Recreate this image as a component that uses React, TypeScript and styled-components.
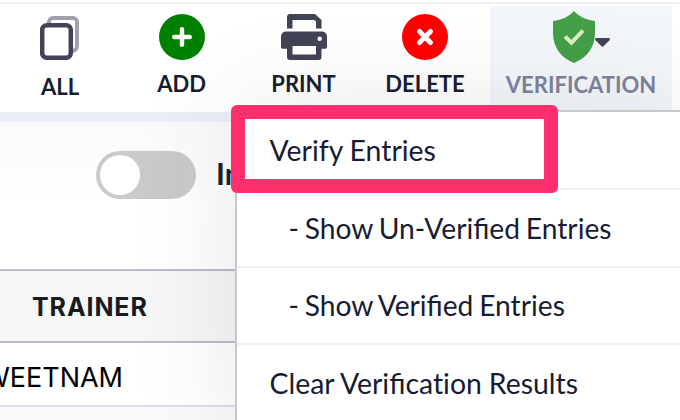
import React from "react";
import styled, { createGlobalStyle } from "styled-components";

const GlobalStyle = createGlobalStyle`
  * { box-sizing: border-box; }
  body { margin: 0; background: #fff; overflow: hidden; }
`;

const Page = styled.div`
  position: relative;
  width: 680px;
  height: 420px;
  padding-top: 2px;
  overflow: hidden;
  background: #fff;
  color: #181c32;
  font-family: Lato, "Liberation Sans", sans-serif;
`;

const Toolbar = styled.header`
  display: flex;
  height: 120px;
  border-top: 2px solid #eef0f8;
  border-bottom: 10px solid #ebeef7;
`;

const Tool = styled.button<{ $top: number; $gap: number; $width: number }>`
  display: flex;
  flex-direction: column;
  align-items: center;
  width: ${(p) => p.$width}px;
  padding: ${(p) => p.$top}px 0 0;
  gap: ${(p) => p.$gap}px;
  border: 0;
  background: none;
  color: #181c32;
  font-family: inherit;
`;

const ActiveTool = styled(Tool)`
  height: 106px;
  margin: 2px 0 0 4px;
  background: #f3f7fb;
  color: #7e8299;
`;

const Label = styled.span`
  font-size: 22px;
  line-height: 26px;
  font-weight: 700;
  white-space: nowrap;
`;

const Icon = styled.svg`
  display: block;
  flex: none;
`;

const ShieldRow = styled.span`
  display: flex;
  align-items: center;
`;

const CaretSlot = styled.span`
  padding-top: 11px;
`;

const FilterBar = styled.section`
  display: flex;
  align-items: center;
  height: 147px;
  padding: 0 0 41px 96px;
  gap: 20px;
  background: linear-gradient(#fafafa, #fff 80px);
`;

const Switch = styled.span`
  display: flex;
  flex: none;
  width: 100px;
  height: 48px;
  padding: 4px;
  border-radius: 24px;
  background: #cacaca;
`;

const Knob = styled.span`
  width: 40px;
  height: 40px;
  border-radius: 50%;
  background: #fff;
`;

const FilterLabel = styled.span`
  padding-bottom: 4px;
  font-size: 30px;
  font-weight: 700;
  white-space: nowrap;
`;

const HeaderCell = styled.div`
  display: flex;
  align-items: center;
  height: 74px;
  padding: 2px 0 0 32px;
  border-top: 2px solid #b8bcc6;
  border-bottom: 2px solid #b8bcc6;
  background: #f7f7f7;
  color: #181c20;
  font: 700 25px Inter, sans-serif;
  letter-spacing: 0.9px;
`;

const Row = styled.div`
  display: flex;
  align-items: center;
  width: 123px;
  height: 62px;
  padding-top: 6px;
  justify-content: flex-end;
  color: #000;
  font: 400 27px Inter, sans-serif;
`;

const NextRow = styled.div`
  height: 15px;
  border-top: 2px solid #dde0ec;
  background: #fafafa;
`;

const Menu = styled.nav`
  position: absolute;
  top: 110px;
  left: 235px;
  width: 460px;
  height: 330px;
  border: 2px solid #c8c8c8;
  background: #fff;
  box-shadow: 0 0 100px rgba(60, 55, 80, 0.12);
`;

const MenuItem = styled.div<{ $indent?: boolean }>`
  display: flex;
  align-items: center;
  height: 77.8px;
  padding: 0 0 0 ${(p) => (p.$indent ? 51.5 : 32.5)}px;
  border-bottom: 2px solid #eee;
  font-size: ${(p) => (p.$indent ? 28.2 : 28.4)}px;
  word-spacing: ${(p) => (p.$indent ? -1.4 : -0.3)}px;
  white-space: pre;
`;

const PlainLetters = styled.span`
  font-variant-ligatures: none;
`;

const Highlight = styled.div`
  position: absolute;
  top: 105px;
  left: 231px;
  width: 327px;
  height: 88px;
  border-radius: 6px;
  border: 14px solid #ff2e6c;
`;

function CopyIcon() {
  return (
    <Icon width="40" height="44" viewBox="0 0 40 44" fill="none" strokeWidth="4">
      <path d="M9 7V6a4 4 0 0 1 4-4h20a4 4 0 0 1 4 4v24a5 5 0 0 1-5 5" stroke="#a0a0ac" />
      <rect x="2.200" y="9.200" width="28.600" height="32.600" rx="4.500" stroke="#434356" strokeWidth="4.500" />
    </Icon>
  );
}

function AddIcon() {
  return (
    <Icon width="46" height="46" viewBox="0 0 46 46">
      <circle cx="23" cy="23" r="23" fill="#008000" />
      <path d="M23 15.200v15.600M15.200 23h15.600" stroke="#fff" strokeWidth="4.400" strokeLinecap="round" />
    </Icon>
  );
}

function PrintIcon() {
  return (
    <Icon width="46" height="46" viewBox="0 0 46 46" fill="#434356">
      <path d="M6 14.500V3a3 3 0 0 1 3-3h25l6.500 6v8.500h-5.500V8.500a2.500 2.500 0 0 0-2.500-2.500H11.500v8.500Z" />
      <path
        fillRule="evenodd"
        d="M5 17.500h36a5 5 0 0 1 5 5V33a1.700 1.700 0 0 1-1.700 1.700H40.500V43a3 3 0 0 1-3 3H9a3 3 0 0 1-3-3v-8.300H1.700A1.700 1.700 0 0 1 0 33V22.500a5 5 0 0 1 5-5ZM11.500 32v8.500H35V32ZM38.700 22.500a2.200 2.200 0 1 0 0 4.400a2.200 2.200 0 1 0 0-4.400Z"
      />
    </Icon>
  );
}

function DeleteIcon() {
  return (
    <Icon width="46" height="46" viewBox="0 0 46 46">
      <circle cx="23" cy="23" r="23" fill="#f00" />
      <path d="m17.500 17.500 11 11m0-11-11 11" stroke="#fff" strokeWidth="5" strokeLinecap="round" />
    </Icon>
  );
}

function ShieldIcon() {
  return (
    <Icon width="42" height="52" viewBox="0 0 42 52">
      <path d="M21 0c5 5.500 12 9 21 10v12c0 14-8 25-21 30C8 47 0 36 0 22V10C9 9 16 5.500 21 0Z" fill="#449f47" />
      <path d="m12 25.500 6.500 6.200L30 19.500" fill="none" stroke="#dcedc8" strokeWidth="4" />
    </Icon>
  );
}

function CaretIcon() {
  return (
    <Icon width="15" height="9" viewBox="0 0 15 9" fill="#434356">
      <path d="M1 0h13q1.600.8.500 2.200L8.500 8.300q-1 .8-2 0L.5 2.200Q-.6.800 1 0Z" />
    </Icon>
  );
}

export default function App() {
  return (
    <Page>
      <GlobalStyle />
      <Toolbar>
        <Tool $width={120} $top={12} $gap={14}>
          <CopyIcon />
          <Label>ALL</Label>
        </Tool>
        <Tool $width={123} $top={10} $gap={11}>
          <AddIcon />
          <Label>ADD</Label>
        </Tool>
        <Tool $width={121} $top={10} $gap={11}>
          <PrintIcon />
          <Label>PRINT</Label>
        </Tool>
        <Tool $width={122} $top={10} $gap={11}>
          <DeleteIcon />
          <Label>DELETE</Label>
        </Tool>
        <ActiveTool $width={182} $top={5} $gap={9}>
          <ShieldRow>
            <ShieldIcon />
            <CaretSlot>
              <CaretIcon />
            </CaretSlot>
          </ShieldRow>
          <Label>VERIFICATION</Label>
        </ActiveTool>
      </Toolbar>
      <FilterBar>
        <Switch>
          <Knob />
        </Switch>
        <FilterLabel>In</FilterLabel>
      </FilterBar>
      <HeaderCell>TRAINER</HeaderCell>
      <Row>
        <span>SWEETNAM</span>
      </Row>
      <NextRow />
      <Menu>
        <MenuItem>Verify Entries</MenuItem>
        <MenuItem $indent>- Show Un-Verified Entries</MenuItem>
        <MenuItem $indent>- Show Verified Entries</MenuItem>
        <MenuItem>
          <span>
            Clear Verifi<PlainLetters>cation</PlainLetters> Results
          </span>
        </MenuItem>
      </Menu>
      <Highlight />
    </Page>
  );
}
